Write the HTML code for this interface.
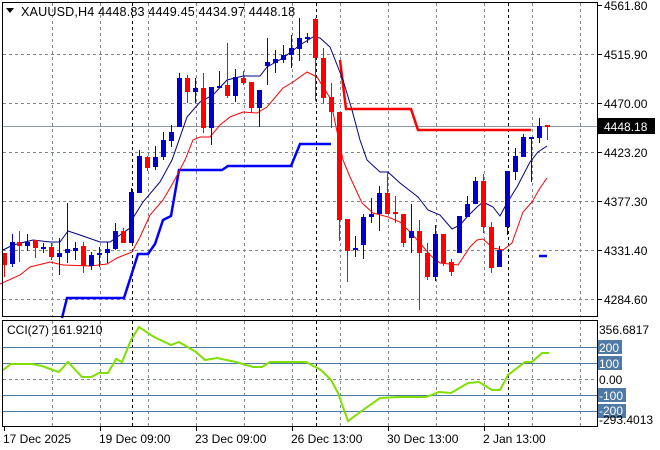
<!DOCTYPE html>
<html><head><meta charset="utf-8"><style>
html,body{margin:0;padding:0;background:#fff;}
svg{display:block;font-family:"Liberation Sans",sans-serif;}
</style></head><body>
<svg width="660" height="450" viewBox="0 0 660 450" xmlns="http://www.w3.org/2000/svg">
<rect width="660" height="450" fill="#fff"/>
<g stroke="#7f8791" stroke-width="1" stroke-dasharray="3,3" fill="none">
<path d="M52.5 3V316M100.5 3V316M148.5 3V316M196.5 3V316M244.5 3V316M292.5 3V316M340.5 3V316M388.5 3V316M436.5 3V316M484.5 3V316M532.5 3V316M580.5 3V316"/>
<path d="M3 54.5H597M3 103.5H597M3 152.5H597M3 201.5H597M3 250.5H597M3 299.5H597"/>
<path d="M52.5 321V426M100.5 321V426M148.5 321V426M196.5 321V426M244.5 321V426M292.5 321V426M340.5 321V426M388.5 321V426M436.5 321V426M484.5 321V426M532.5 321V426M580.5 321V426"/>
<path d="M3 379.5H597"/>
</g>
<g stroke="#000" stroke-width="1" stroke-dasharray="3,3" fill="none">
<path d="M132.5 3V316M316.5 3V316M508.5 3V316M132.5 321V426M316.5 321V426M508.5 321V426"/>
</g>
<path d="M3 126.5H597" stroke="#8a98a8" stroke-width="1"/>
<g stroke="#4f7aa6" stroke-width="1"><path d="M3 347.5H597M3 363.5H597M3 395.5H597M3 411.5H597"/></g>
<polyline fill="none" stroke="#0000ff" stroke-width="2.5" points="62,318 67,298 124,298 138,254 148,254 155,244 163,220 171,216 179,170 222,170 228,166 291,166 300,144 331,144"/>
<path d="M539 256H547" stroke="#0000ff" stroke-width="2.5"/>
<polyline fill="none" stroke="#ff0000" stroke-width="2.5" points="340,60 346,109 411,109 418,130 531,130"/>
<polyline fill="none" stroke="#000080" stroke-width="1" points="3,250 13,245 33,240 50,242 60,242 68,231 80,235 100,242 110,242 130,228 133,218 143,202 160,182 172,160 187,117 200,102 213,95 227,80 243,76 260,76 267,67 283,58 300,45 313,37 320,38 330,47 343,80 352,110 360,140 367,160 380,172 388,172 400,183 418,197 428,210 440,215 452,229 460,225 467,217 477,207 483,202 493,207 500,216 507,203 517,187 530,162 538,152 547,146"/>
<polyline fill="none" stroke="#ff0000" stroke-width="1" points="0,284 20,275 30,267 50,262 63,265 90,266 107,264 117,258 132,252 140,237 150,215 163,200 173,183 185,160 193,140 200,137 210,137 220,125 230,117 243,112 257,113 267,107 283,88 293,82 307,72 317,77 330,98 343,160 350,177 362,203 373,213 388,217 400,222 410,232 420,243 430,255 440,263 458,265 470,247 477,240 483,239 493,248 503,250 512,243 523,212 532,202 540,188 547,178"/>
<path stroke="#0000c8" stroke-width="1" fill="none" d="M12.5 234V267M27.5 234V251M43.5 243V253M59.5 238V275M67.5 203V263M75.5 242V260M91.5 252V270M99.5 247V267M107.5 242V263M115.5 223V250M131.5 188V243M139.5 150V193M155.5 146V170M163.5 132V160M171.5 125V147M179.5 73V127M195.5 78V103M211.5 87V145M219.5 71V88M235.5 69V102M259.5 90V127M267.5 38V85M275.5 50V73M283.5 45V63M291.5 35V68M299.5 18V61M307.5 33V43M355.5 236V257M363.5 214V259M371.5 198V223M379.5 186V231M411.5 204V253M435.5 225V281M459.5 216V253M467.5 196V217M475.5 177V204M499.5 246V267M507.5 171V235M515.5 148V180M523.5 134V157M531.5 137V182M539.5 118V143"/>
<path stroke="#ff0000" stroke-width="1" fill="none" d="M4.5 253V277M19.5 231V262M35.5 240V258M51.5 243V260M83.5 242V273M123.5 228V243M147.5 156V171M187.5 75V103M203.5 73V133M227.5 43V98M243.5 71V85M251.5 82V113M315.5 18V101M323.5 48V103M331.5 83V128M339.5 112V241M347.5 219V282M387.5 172V214M395.5 196V223M403.5 214V247M419.5 220V310M427.5 243V280M443.5 234V266M451.5 259V276M483.5 174V233M491.5 222V273M547.5 125V140"/>
<g fill="#0000c8">
<rect x="10" y="242" width="5" height="22"/><rect x="25" y="242" width="5" height="4"/><rect x="41" y="247" width="5" height="2"/><rect x="57" y="253" width="5" height="4"/><rect x="65" y="249" width="5" height="4"/><rect x="73" y="248" width="5" height="3"/><rect x="89" y="255" width="5" height="11"/><rect x="97" y="253" width="5" height="2"/><rect x="105" y="249" width="5" height="4"/><rect x="113" y="231" width="5" height="18"/><rect x="129" y="192" width="5" height="51"/><rect x="137" y="156" width="5" height="37"/><rect x="153" y="157" width="5" height="10"/><rect x="161" y="140" width="5" height="17"/><rect x="169" y="132" width="5" height="9"/><rect x="177" y="78" width="5" height="49"/><rect x="193" y="88" width="5" height="4"/><rect x="209" y="87" width="5" height="41"/><rect x="217" y="86" width="5" height="2"/><rect x="233" y="77" width="5" height="19"/><rect x="257" y="90" width="5" height="18"/><rect x="265" y="62" width="5" height="4"/><rect x="273" y="59" width="5" height="4"/><rect x="281" y="55" width="5" height="5"/><rect x="289" y="48" width="5" height="7"/><rect x="297" y="38" width="5" height="11"/><rect x="305" y="37" width="5" height="2"/><rect x="353" y="248" width="5" height="2"/><rect x="361" y="217" width="5" height="28"/><rect x="369" y="214" width="5" height="3"/><rect x="377" y="193" width="5" height="21"/><rect x="409" y="231" width="5" height="7"/><rect x="433" y="234" width="5" height="43"/><rect x="457" y="216" width="5" height="37"/><rect x="465" y="204" width="5" height="13"/><rect x="473" y="181" width="5" height="23"/><rect x="497" y="250" width="5" height="17"/><rect x="505" y="171" width="5" height="56"/><rect x="513" y="156" width="5" height="16"/><rect x="521" y="137" width="5" height="20"/><rect x="529" y="137" width="5" height="2"/><rect x="537" y="126" width="5" height="12"/>
</g>
<g fill="#ff0000">
<rect x="2" y="253" width="5" height="12"/><rect x="17" y="242" width="5" height="4"/><rect x="33" y="240" width="5" height="8"/><rect x="49" y="247" width="5" height="10"/><rect x="81" y="246" width="5" height="20"/><rect x="121" y="231" width="5" height="12"/><rect x="145" y="157" width="5" height="11"/><rect x="185" y="78" width="5" height="14"/><rect x="201" y="88" width="5" height="40"/><rect x="225" y="85" width="5" height="11"/><rect x="241" y="78" width="5" height="5"/><rect x="249" y="82" width="5" height="26"/><rect x="313" y="19" width="5" height="39"/><rect x="321" y="58" width="5" height="40"/><rect x="329" y="97" width="5" height="15"/><rect x="337" y="112" width="5" height="108"/><rect x="345" y="219" width="5" height="32"/><rect x="385" y="193" width="5" height="21"/><rect x="393" y="212" width="5" height="2"/><rect x="401" y="214" width="5" height="29"/><rect x="417" y="231" width="5" height="22"/><rect x="425" y="253" width="5" height="24"/><rect x="441" y="234" width="5" height="29"/><rect x="449" y="262" width="5" height="10"/><rect x="481" y="181" width="5" height="46"/><rect x="489" y="227" width="5" height="41"/><rect x="545" y="125" width="5" height="2"/>
</g>
<polyline fill="none" stroke="#7fe000" stroke-width="2" points="3,370 11,364 32,364 42,366 53,370 59,372 68,362 82,377 91,377 99,373 108,373 116,359 122,362 131,340 139,327 154,337 171,345 179,342 196,352 205,360 217,358 236,362 253,367 262,367 270,362 306,362 321,370 331,380 338,393 348,421 363,410 380,398 397,397 426,397 439,392 451,393 468,383 479,382 492,390 500,390 508,375 525,362 532,362 542,353 549,353"/>
<g fill="none" stroke="#000" stroke-width="1">
<path d="M2.5 2.5H597.5V316.5H2.5Z"/>
<path d="M2.5 320.5H597.5V426.5H2.5Z"/>
<path d="M597 5.5H602M597 54.5H602M597 103.5H602M597 152.5H602M597 201.5H602M597 250.5H602M597 299.5H602"/>
<path d="M4.5 426V431M100.5 426V431M196.5 426V431M292.5 426V431M388.5 426V431M484.5 426V431"/>
</g>
<path d="M6 8H14L10 13Z" fill="#000"/>
<text x="21" y="16" font-size="12.6" letter-spacing="0.15" fill="#000">XAUUSD,H4  4448.83 4449.45 4434.97 4448.18</text>
<text x="7" y="334" font-size="12" fill="#000">CCI(27) 161.9210</text>
<g font-size="12" fill="#000">
<text x="604" y="10">4561.80</text>
<text x="604" y="59">4515.90</text>
<text x="604" y="108">4470.00</text>
<text x="604" y="157">4423.20</text>
<text x="604" y="206">4377.30</text>
<text x="604" y="255">4331.40</text>
<text x="604" y="304">4284.60</text>
</g>
<rect x="598" y="118" width="57" height="16" fill="#000"/>
<text x="604" y="131" font-size="12" fill="#fff">4448.18</text>
<g font-size="12">
<text x="599" y="334" fill="#000">356.6817</text>
<rect x="598" y="340" width="24" height="14" fill="#4f7aa6"/><text x="599" y="352" fill="#fff">200</text>
<rect x="598" y="356" width="24" height="14" fill="#4f7aa6"/><text x="599" y="368" fill="#fff">100</text>
<text x="599" y="384" fill="#000">0.00</text>
<rect x="598" y="388" width="28" height="14" fill="#4f7aa6"/><text x="599" y="400" fill="#fff">-100</text>
<rect x="598" y="404" width="28" height="14" fill="#4f7aa6"/><text x="599" y="415" fill="#fff">-200</text>
<text x="599" y="424" fill="#000">-293.4013</text>
</g>
<g font-size="12" fill="#000">
<text x="3" y="443">17 Dec 2025</text>
<text x="99" y="443">19 Dec 09:00</text>
<text x="195" y="443">23 Dec 09:00</text>
<text x="291" y="443">26 Dec 13:00</text>
<text x="387" y="443">30 Dec 13:00</text>
<text x="483" y="443">2 Jan 13:00</text>
</g>
</svg>
</body></html>
